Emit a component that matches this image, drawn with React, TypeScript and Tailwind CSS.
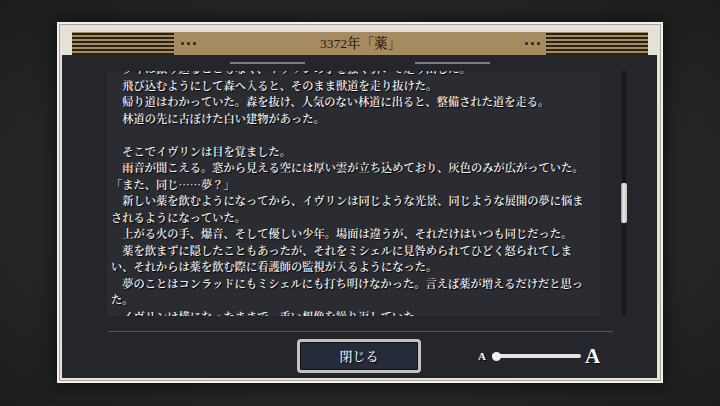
const lines = [
  "　少年は振り返ることもなく、イヴリンの手を強く引いて走り出した。",
  "　飛び込むようにして森へ入ると、そのまま獣道を走り抜けた。",
  "　帰り道はわかっていた。森を抜け、人気のない林道に出ると、整備された道を走る。",
  "　林道の先に古ぼけた白い建物があった。",
  "",
  "　そこでイヴリンは目を覚ました。",
  "　雨音が聞こえる。窓から見える空には厚い雲が立ち込めており、灰色のみが広がっていた。",
  "「また、同じ……夢？」",
  "　新しい薬を飲むようになってから、イヴリンは同じような光景、同じような展開の夢に悩ま",
  "されるようになっていた。",
  "　上がる火の手、爆音、そして優しい少年。場面は違うが、それだけはいつも同じだった。",
  "　薬を飲まずに隠したこともあったが、それをミシェルに見咎められてひどく怒られてしま",
  "い、それからは薬を飲む際に看護師の監視が入るようになった。",
  "　夢のことはコンラッドにもミシェルにも打ち明けなかった。言えば薬が増えるだけだと思っ",
  "た。",
  "　イヴリンは横になったままで、重い想像を繰り返していた。",
];

function Stripes() {
  return (
    <div className="flex h-full w-[102px] flex-col gap-[2px] pt-[1px]">
      <div className="h-[2px] bg-[#2a2118]" />
      <div className="h-[2px] bg-[#2a2118]" />
      <div className="h-[2px] bg-[#2a2118]" />
      <div className="h-[2px] bg-[#2a2118]" />
      <div className="h-[2px] bg-[#2a2118]" />
      <div className="h-[2px] bg-[#2a2118]" />
    </div>
  );
}

function Dots() {
  return (
    <div className="flex items-center gap-[3px]">
      <span className="h-[3px] w-[3px] rounded-full bg-[#2a2118]" />
      <span className="h-[3px] w-[3px] rounded-full bg-[#2a2118]" />
      <span className="h-[3px] w-[3px] rounded-full bg-[#2a2118]" />
    </div>
  );
}

export default function App() {
  return (
    <div className="flex h-[406px] w-[720px] justify-center overflow-hidden bg-[radial-gradient(ellipse_at_center,#303030_0%,#282828_55%,#1d1d1d_100%)] pt-[22px] font-['Noto_Serif_CJK_JP','Noto_Sans_CJK_JP',serif]">
      <div className="flex h-[361px] w-[606px] flex-col bg-[#e6e2da] px-[5px] pr-[6px] pb-[5px] pt-[10px] shadow-[inset_0_0_0_2px_#f4f1eb,inset_0_0_0_3px_#a9a49a,0_0_18px_rgba(0,0,0,0.7)]">
        {/* header */}
        <div className="ml-[10px] mr-[9px] flex h-[23px] items-stretch bg-[#a58b5f]">
          <Stripes />
          <div className="ml-[7px] flex items-center">
            <Dots />
          </div>
          <div className="flex flex-1 items-center justify-center font-['Liberation_Serif','Noto_Serif_CJK_JP','Noto_Sans_CJK_JP',serif] text-[13.5px] font-medium leading-none text-[#231b12]">
            3372年「薬」
          </div>
          <div className="mr-[6px] flex items-center">
            <Dots />
          </div>
          <Stripes />
        </div>

        {/* body */}
        <div className="flex flex-1 flex-col bg-[#24262b]">
          <div className="mt-[7px] flex justify-center gap-[110px]">
            <div className="h-[2px] w-[75px] bg-[#7c7e83]" />
            <div className="h-[2px] w-[75px] bg-[#7c7e83]" />
          </div>

          <div className="mt-[7px] flex h-[245px]">
            <div className="ml-[45px] h-full w-[493px] overflow-hidden bg-[#2a2c31] pl-[4px]">
              <div className="-mt-[11px] text-[11.25px] font-semibold text-[#f4f4f4] [text-shadow:1px_1px_1px_#000]">
                {lines.map((l, i) => (
                  <div key={i} className="h-[16.5px] whitespace-pre leading-[16.5px]">
                    {l}
                  </div>
                ))}
              </div>
            </div>
            <div className="ml-[22px] flex h-full w-[4px] flex-col bg-[#18191c]">
              <div className="-ml-px mt-[112px] h-[40px] w-[6px] rounded-[2px] bg-[linear-gradient(90deg,#9a9a9a,#e8e8e8_40%,#c4c4c4)]" />
            </div>
          </div>

          <div className="ml-[46px] mt-[15px] h-px w-[505px] bg-[#55575d]" />

          <div className="mt-[7px] flex items-center pl-[235px]">
            <button className="flex h-[34px] w-[124px] items-center justify-center rounded-[4px] border-[3px] border-[#c7c3ba] bg-[#252b3a] text-[13px] font-medium text-[#f4f4f4] shadow-[inset_0_0_0_1px_#111318] [text-shadow:1px_1px_1px_#000]">
              閉じる
            </button>
            <div className="ml-[57px] flex items-center font-['Liberation_Serif',serif] font-bold text-white [text-shadow:1px_1px_0_#000]">
              <span className="text-[11px] leading-none">A</span>
              <div className="relative ml-[6px] flex h-[9px] w-[89px] items-center">
                <div className="h-[4px] w-full rounded-full bg-[#e4e4e4]" />
                <div className="absolute left-0 top-0 h-[9px] w-[9px] rounded-full bg-[#f2f2f2]" />
              </div>
              <span className="ml-[4px] text-[21px] leading-none">A</span>
            </div>
          </div>
        </div>
      </div>
    </div>
  );
}
